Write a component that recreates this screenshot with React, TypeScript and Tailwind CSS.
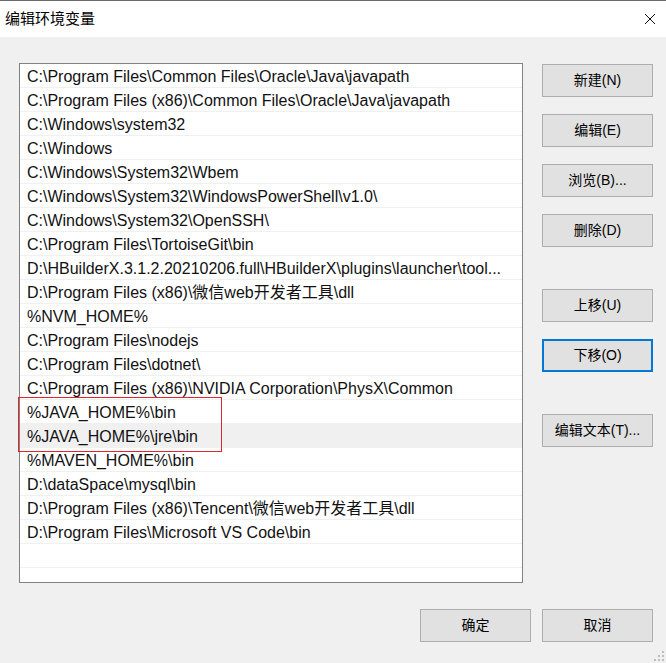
import React from "react";

const paths = [
  "C:\\Program Files\\Common Files\\Oracle\\Java\\javapath",
  "C:\\Program Files (x86)\\Common Files\\Oracle\\Java\\javapath",
  "C:\\Windows\\system32",
  "C:\\Windows",
  "C:\\Windows\\System32\\Wbem",
  "C:\\Windows\\System32\\WindowsPowerShell\\v1.0\\",
  "C:\\Windows\\System32\\OpenSSH\\",
  "C:\\Program Files\\TortoiseGit\\bin",
  "D:\\HBuilderX.3.1.2.20210206.full\\HBuilderX\\plugins\\launcher\\tool...",
  "D:\\Program Files (x86)\\微信web开发者工具\\dll",
  "%NVM_HOME%",
  "C:\\Program Files\\nodejs",
  "C:\\Program Files\\dotnet\\",
  "C:\\Program Files (x86)\\NVIDIA Corporation\\PhysX\\Common",
  "%JAVA_HOME%\\bin",
  "%JAVA_HOME%\\jre\\bin",
  "%MAVEN_HOME%\\bin",
  "D:\\dataSpace\\mysql\\bin",
  "D:\\Program Files (x86)\\Tencent\\微信web开发者工具\\dll",
  "D:\\Program Files\\Microsoft VS Code\\bin",
  "",
];

const font = "font-['Segoe_UI','Liberation_Sans','Noto_Sans_CJK_SC',sans-serif]";

const Btn = ({ label, focused }: { label: string; focused?: boolean }) => (
  <button
    className={
      "w-[111px] h-[33px] bg-[#e1e1e1] text-[14px] text-black flex items-center justify-center " +
      (focused ? "border-2 border-[#0078d7]" : "border border-[#adadad]")
    }
  >
    {label}
  </button>
);

export default function App() {
  return (
    <div className={"w-[666px] h-[663px] bg-[#f0f0f0] border-t border-[#6b6b6b] flex flex-col overflow-hidden relative " + font}>
      {/* title bar */}
      <div className="h-[36px] bg-white flex items-center justify-between pl-[5px] pr-[10px]">
        <span className="text-[15px] text-black">编辑环境变量</span>
        <svg width="12" height="12" viewBox="0 0 12 12">
          <path d="M1 1 L11 11 M11 1 L1 11" stroke="#111" strokeWidth="1" />
        </svg>
      </div>

      <div className="flex pt-[26px] pl-[19px]">
        {/* list */}
        <div className="relative w-[504px] h-[520px] bg-white border border-[#828282]">
          {paths.map((p, i) => (
            <div
              key={i}
              className={
                "h-[24px] border-b border-[#f0f0f0] pl-[7px] pr-[4px] pt-[2px] flex items-center whitespace-nowrap overflow-hidden text-[16px] text-[#111]" +
                (i === 15 ? " bg-[#f0f0f0]" : "")
              }
            >
              {p}
            </div>
          ))}
          {/* red highlight box */}
          <div className="absolute left-[-2px] top-[333px] w-[204px] h-[55px] ring-1 ring-inset ring-[#e0262d]" />
        </div>

        {/* buttons */}
        <div className="ml-[19px] mt-[1px] flex flex-col">
          <Btn label="新建(N)" />
          <div className="h-[17px]" />
          <Btn label="编辑(E)" />
          <div className="h-[17px]" />
          <Btn label="浏览(B)..." />
          <div className="h-[17px]" />
          <Btn label="删除(D)" />
          <div className="h-[42px]" />
          <Btn label="上移(U)" />
          <div className="h-[17px]" />
          <Btn label="下移(O)" focused />
          <div className="h-[42px]" />
          <Btn label="编辑文本(T)..." />
        </div>
      </div>

      <div className="flex justify-end gap-[11px] pr-[13px] mt-[26px]">
        <Btn label="确定" />
        <Btn label="取消" />
      </div>

      {/* resize grip */}
      <svg width="12" height="12" viewBox="0 0 12 12" className="absolute right-[1px] bottom-[1px]">
        <rect x="9" y="1" width="2" height="2" fill="#bdbdbd" />
        <rect x="5" y="5" width="2" height="2" fill="#bdbdbd" />
        <rect x="9" y="5" width="2" height="2" fill="#bdbdbd" />
        <rect x="1" y="9" width="2" height="2" fill="#bdbdbd" />
        <rect x="5" y="9" width="2" height="2" fill="#bdbdbd" />
        <rect x="9" y="9" width="2" height="2" fill="#bdbdbd" />
      </svg>
    </div>
  );
}
